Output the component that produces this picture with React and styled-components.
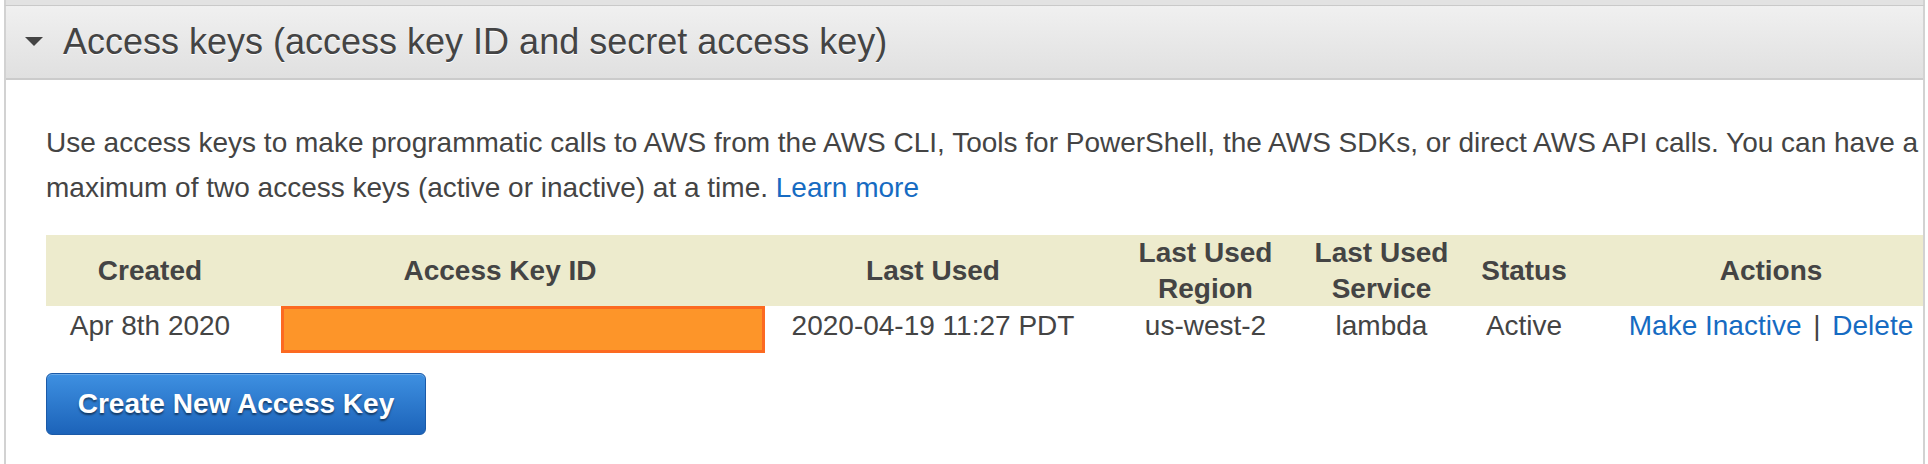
import { styled, createGlobalStyle } from "styled-components";

const GlobalStyle = createGlobalStyle`
  html, body {
    margin: 0;
    padding: 0;
    background: #fff;
  }
  body {
    font-family: "Liberation Sans", Arial, sans-serif;
    color: #444;
  }
`;

const Page = styled.div`
  width: 1928px;
  height: 464px;
  overflow: hidden;
  padding-left: 4px;
  box-sizing: border-box;
`;

const PrevSection = styled.div`
  width: 1921px;
  height: 6px;
  box-sizing: border-box;
  background: #e2e2e2;
  border-left: 2px solid #d2d2d2;
  border-right: 2px solid #d2d2d2;
  border-bottom: 1px solid #c9c9c9;
`;

const Panel = styled.section`
  width: 1921px;
  box-sizing: border-box;
  border-left: 2px solid #d2d2d2;
  border-right: 2px solid #d2d2d2;
  overflow: hidden;
`;

const PanelHeader = styled.div`
  display: flex;
  align-items: center;
  height: 72px;
  padding-left: 19px;
  background: linear-gradient(to bottom, #f0f0f0, #e0e0e0);
  border-bottom: 2px solid #cbcbcb;
`;

const Caret = styled.svg`
  width: 18px;
  height: 9px;
  margin-right: 20px;
  margin-top: -2px;
  fill: #444;
`;

const Title = styled.h2`
  margin: 0;
  font-size: 36px;
  font-weight: normal;
  line-height: 72px;
  color: #444;
  text-shadow: 0 1px 0 #fff;
  white-space: nowrap;
`;

const PanelBody = styled.div`
  padding: 40px 40px 40px;
`;

const Intro = styled.p`
  margin: 0 0 25px;
  font-size: 28px;
  line-height: 45px;
  white-space: nowrap;
`;

const Link = styled.a`
  color: #166bc2;
  text-decoration: none;
  cursor: pointer;
`;

const KeyTable = styled.table`
  width: 1920px;
  table-layout: fixed;
  border-collapse: collapse;
  font-size: 28px;
`;

const HeadCell = styled.th`
  background: #edebcd;
  font-weight: bold;
  line-height: 35.5px;
  height: 71px;
  padding: 0 8px;
  text-align: center;
  vertical-align: middle;
  color: #444;
`;

const Cell = styled.td`
  padding: 0;
  line-height: 40px;
  text-align: ${(p) => (p.$left ? "left" : "center")};
  vertical-align: top;
  white-space: nowrap;
`;

const Redacted = styled.div`
  box-sizing: border-box;
  width: 484px;
  height: 47px;
  margin-left: 27px;
  background: #fd9529;
  border: 3px solid #fc6a21;
`;

const Separator = styled.span`
  color: #444;
  margin: 0 4px;
`;

const CreateButton = styled.button`
  margin-top: 20px;
  width: 380px;
  height: 62px;
  border: 1px solid #1b5aa8;
  border-radius: 6px;
  background: linear-gradient(to bottom, #3e90e1, #1c63b9);
  box-shadow: inset 0 1px 0 rgba(255, 255, 255, 0.25);
  color: #fff;
  font-family: "Liberation Sans", Arial, sans-serif;
  font-size: 28px;
  font-weight: bold;
  text-shadow: 0 2px 2px rgba(0, 0, 0, 0.5);
  cursor: pointer;
  padding: 0;
`;

const columns = [208, 492, 374, 171, 181, 104, 390];

export default function App() {
  return (
    <Page>
      <GlobalStyle />
      <PrevSection />
      <Panel>
        <PanelHeader>
          <Caret viewBox="0 0 18 9">
            <polygon points="0,0 18,0 9,9" />
          </Caret>
          <Title>Access keys (access key ID and secret access key)</Title>
        </PanelHeader>
        <PanelBody>
          <Intro>
            Use access keys to make programmatic calls to AWS from the AWS CLI,
            Tools for PowerShell, the AWS SDKs, or direct AWS API calls. You can
            have a
            <br />
            maximum of two access keys (active or inactive) at a time.{" "}
            <Link>Learn more</Link>
          </Intro>
          <KeyTable>
            <colgroup>
              {columns.map((w, i) => (
                <col key={i} style={{ width: w }} />
              ))}
            </colgroup>
            <thead>
              <tr>
                <HeadCell>Created</HeadCell>
                <HeadCell>Access Key ID</HeadCell>
                <HeadCell>Last Used</HeadCell>
                <HeadCell>Last Used Region</HeadCell>
                <HeadCell>Last Used Service</HeadCell>
                <HeadCell>Status</HeadCell>
                <HeadCell>Actions</HeadCell>
              </tr>
            </thead>
            <tbody>
              <tr>
                <Cell>Apr 8th 2020</Cell>
                <Cell $left>
                  <Redacted />
                </Cell>
                <Cell>2020-04-19 11:27 PDT</Cell>
                <Cell>us-west-2</Cell>
                <Cell>lambda</Cell>
                <Cell>Active</Cell>
                <Cell>
                  <Link>Make Inactive</Link>
                  <Separator> | </Separator>
                  <Link>Delete</Link>
                </Cell>
              </tr>
            </tbody>
          </KeyTable>
          <CreateButton>Create New Access Key</CreateButton>
        </PanelBody>
      </Panel>
    </Page>
  );
}
